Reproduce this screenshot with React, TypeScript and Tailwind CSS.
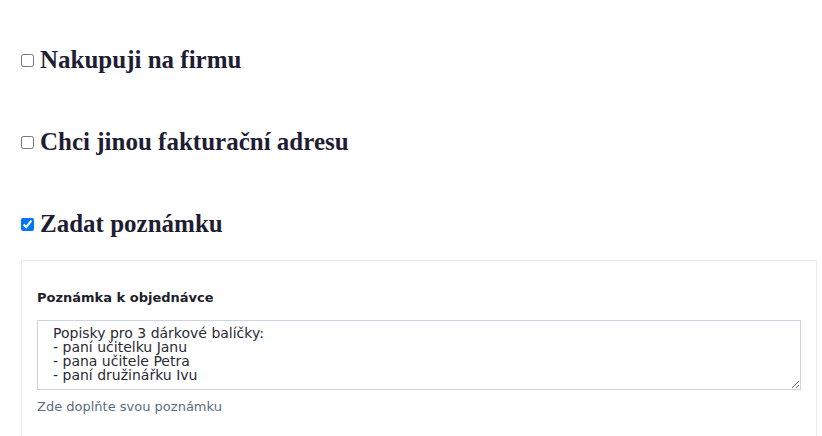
import React from "react";

const HEADING_FONT = { fontFamily: '"Liberation Serif", "DejaVu Serif", serif' };

const options = [
  { id: "firma", label: "Nakupuji na firmu", checked: false },
  { id: "fakturace", label: "Chci jinou fakturační adresu", checked: false },
  { id: "poznamka", label: "Zadat poznámku", checked: true },
];

export default function App() {
  return (
    <div
      className="min-h-[436px] bg-white pt-[40px] pl-[21px] pr-[5px] text-[#1e1e30]"
      style={{ fontFamily: '"DejaVu Sans", "Open Sans", sans-serif' }}
    >
      {options.map((opt, i) => (
        <label
          key={opt.id}
          htmlFor={opt.id}
          className={`flex h-[40px] items-center gap-[6px] ${i > 0 ? "mt-[42px]" : ""}`}
        >
          <input
            id={opt.id}
            type="checkbox"
            defaultChecked={opt.checked}
            className="h-[13px] w-[13px]"
          />
          <span className="text-[25px] font-bold text-[#1f1d33]" style={HEADING_FONT}>
            {opt.label}
          </span>
        </label>
      ))}

      <div className="mt-[16px] border border-[#e8eaf5] px-[15px] pt-[29px] pb-[30px]">
        <label htmlFor="note" className="block text-[13px] leading-[16px] font-bold text-[#1e1e2c]">
          Poznámka k objednávce
        </label>
        <textarea
          id="note"
          defaultValue={"Popisky pro 3 dárkové balíčky:\n- paní učitelku Janu\n- pana učitele Petra\n- paní družinářku Ivu"}
          className="mt-[14px] block h-[70px] w-full border border-[#cdd3e3] px-[15px] py-[5px] text-[14px] leading-[14px] text-[#2a2a35]"
        />
        <p className="mt-[9px] text-[13px] leading-[16px] text-[#5b6b82]">Zde doplňte svou poznámku</p>
      </div>
    </div>
  );
}
